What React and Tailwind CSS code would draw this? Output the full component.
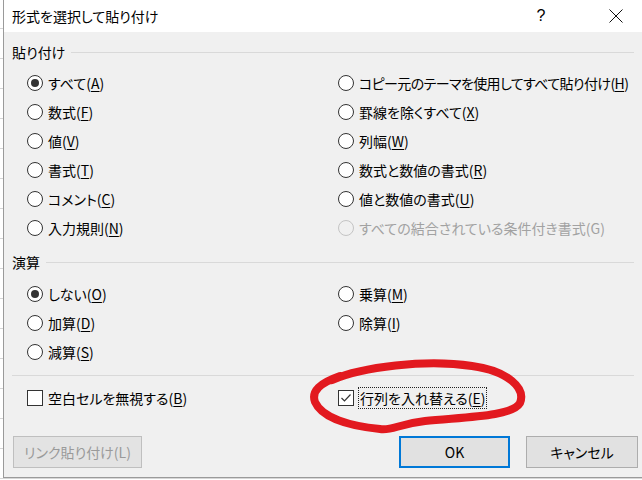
import React from "react";

const FONT = "font-['Meiryo_UI','Noto_Sans_CJK_JP',sans-serif] [font-feature-settings:'palt']";

// 貼り付けオプション（左列・右列のペア）
const PASTE_ROWS = [
  [{ label: "すべて", key: "A", checked: true }, { label: "コピー元のテーマを使用してすべて貼り付け", key: "H", tight: true }],
  [{ label: "数式", key: "F" }, { label: "罫線を除くすべて", key: "X" }],
  [{ label: "値", key: "V" }, { label: "列幅", key: "W" }],
  [{ label: "書式", key: "T" }, { label: "数式と数値の書式", key: "R" }],
  [{ label: "コメント", key: "C" }, { label: "値と数値の書式", key: "U" }],
  [{ label: "入力規則", key: "N" }, { label: "すべての結合されている条件付き書式", key: "G", disabled: true }],
];

const OP_ROWS = [
  [{ label: "しない", key: "O", checked: true }, { label: "乗算", key: "M" }],
  [{ label: "加算", key: "D" }, { label: "除算", key: "I" }],
  [{ label: "減算", key: "S" }, null],
];

function Accel({ label, k, disabled, tight }) {
  return (
    <span className={`whitespace-nowrap ${tight ? "tracking-[-0.6px]" : ""}`}>
      {label}(
      {disabled ? k : <span className="underline underline-offset-[2px] decoration-1">{k}</span>})
    </span>
  );
}

function Radio({ checked, disabled }) {
  return (
    <span
      className={`w-[16px] h-[16px] shrink-0 rounded-full border flex items-center justify-center ${
        disabled ? "border-[#c4c4c4] bg-[#f0f0f0]" : "border-[#333] bg-white"
      }`}
    >
      {checked && <span className="w-[8px] h-[8px] rounded-full bg-[#333]" />}
    </span>
  );
}

function Option({ opt }) {
  if (!opt) return <div />;
  return (
    <label className={`flex items-center gap-[5px] ${opt.disabled ? "text-[#a2a2a2]" : "text-black"}`}>
      <Radio checked={opt.checked} disabled={opt.disabled} />
      <Accel label={opt.label} k={opt.key} disabled={opt.disabled} tight={opt.tight} />
    </label>
  );
}

function Checkbox({ checked }) {
  return (
    <span className="w-[16px] h-[16px] shrink-0 border border-[#333] bg-white flex items-center justify-center">
      {checked && (
        <svg width="12" height="12" viewBox="0 0 12 12">
          <path d="M1.5 6 L4.5 9 L10.5 2.5" fill="none" stroke="#333" strokeWidth="1.2" />
        </svg>
      )}
    </span>
  );
}

function GroupHeader({ children }) {
  return (
    <div className="flex items-center h-[20px] pl-[8px] pr-[8px] gap-[6px]">
      <span className="text-black">{children}</span>
      <span className="flex-1 h-px bg-[#d9d9d9]" />
    </div>
  );
}

function OptionGrid({ rows }) {
  return (
    <div className="pl-[23px]">
      {rows.map((row, i) => (
        <div key={i} className="grid grid-cols-[311px_1fr] h-[29px] items-center">
          <Option opt={row[0]} />
          <Option opt={row[1]} />
        </div>
      ))}
    </div>
  );
}

export default function App() {
  return (
    <div
      className={`relative w-[642px] h-[480px] overflow-hidden bg-white bg-[repeating-linear-gradient(to_bottom,transparent_0_28px,#d6d6d6_28px_29px,transparent_29px_30px)] ${FONT} text-[14px] leading-none`}
    >
      {/* ダイアログ本体 */}
      <div className="ml-[3px] w-[639px] h-[478px] border-l border-b border-[#9a9a9a] flex flex-col">
        {/* タイトルバー */}
        <div className="h-[32px] bg-white flex items-center pl-[8px] shrink-0">
          <span className="text-black">形式を選択して貼り付け</span>
          <div className="ml-auto flex items-center gap-[26px] pr-[3px]">
            <span className="w-[46px] pr-[6px] text-center text-[16px] text-black font-['Liberation_Sans',sans-serif]">?</span>
            <span className="w-[46px] flex justify-center">
              <svg width="14" height="14" viewBox="0 0 14 14">
                <path d="M0.5 0.5 L13.5 13.5 M13.5 0.5 L0.5 13.5" stroke="#111" strokeWidth="1" />
              </svg>
            </span>
          </div>
        </div>

        <div className="flex-1 bg-[#f0f0f0] pt-[10px] flex flex-col">
          <GroupHeader>貼り付け</GroupHeader>
          <div className="mt-[6px]">
            <OptionGrid rows={PASTE_ROWS} />
          </div>

          <div className="mt-[10px]">
            <GroupHeader>演算</GroupHeader>
          </div>
          <div className="mt-[7px]">
            <OptionGrid rows={OP_ROWS} />
          </div>

          <div className="mt-[9px] mx-[8px] h-px bg-[#d9d9d9]" />

          <div className="mt-[11px] pl-[23px] grid grid-cols-[311px_1fr] h-[22px] items-center">
            <label className="flex items-center gap-[5px] text-black">
              <Checkbox />
              <Accel label="空白セルを無視する" k="B" />
            </label>
            <label className="flex items-center gap-[4px] text-black">
              <Checkbox checked />
              <span className="border border-dotted border-[#222] h-[22px] px-[1px] flex items-center">
                <Accel label="行列を入れ替える" k="E" />
              </span>
            </label>
          </div>

          <div className="mt-[27px] pl-[9px] pr-[4px] flex items-center">
            <button className="w-[129px] h-[32px] border border-[#bfbfbf] bg-[#e3e3e3] text-[#9a9a9a]">
              リンク貼り付け(L)
            </button>
            <div className="ml-auto flex gap-[16px]">
              <button className="w-[111px] h-[32px] border-2 border-[#0078d7] bg-[#e1e1e1] text-black">OK</button>
              <button className="w-[112px] h-[32px] border border-[#adadad] bg-[#e1e1e1] text-black">キャンセル</button>
            </div>
          </div>
        </div>
      </div>

      {/* 赤ペンの囲み */}
      <svg className="absolute inset-0 pointer-events-none" width="642" height="480" viewBox="0 0 642 480">
        <path
          d="M332 380 C 362 367, 425 359, 472 366 C 508 371, 526 388, 520 403 C 512 417, 462 417, 425 421 C 398 424, 392 431, 380 429 C 350 426, 322 418, 315 402 C 311 391, 320 383, 340 376"
          fill="none"
          stroke="#e2191f"
          strokeWidth="8"
          strokeLinecap="round"
          strokeLinejoin="round"
        />
      </svg>
    </div>
  );
}
